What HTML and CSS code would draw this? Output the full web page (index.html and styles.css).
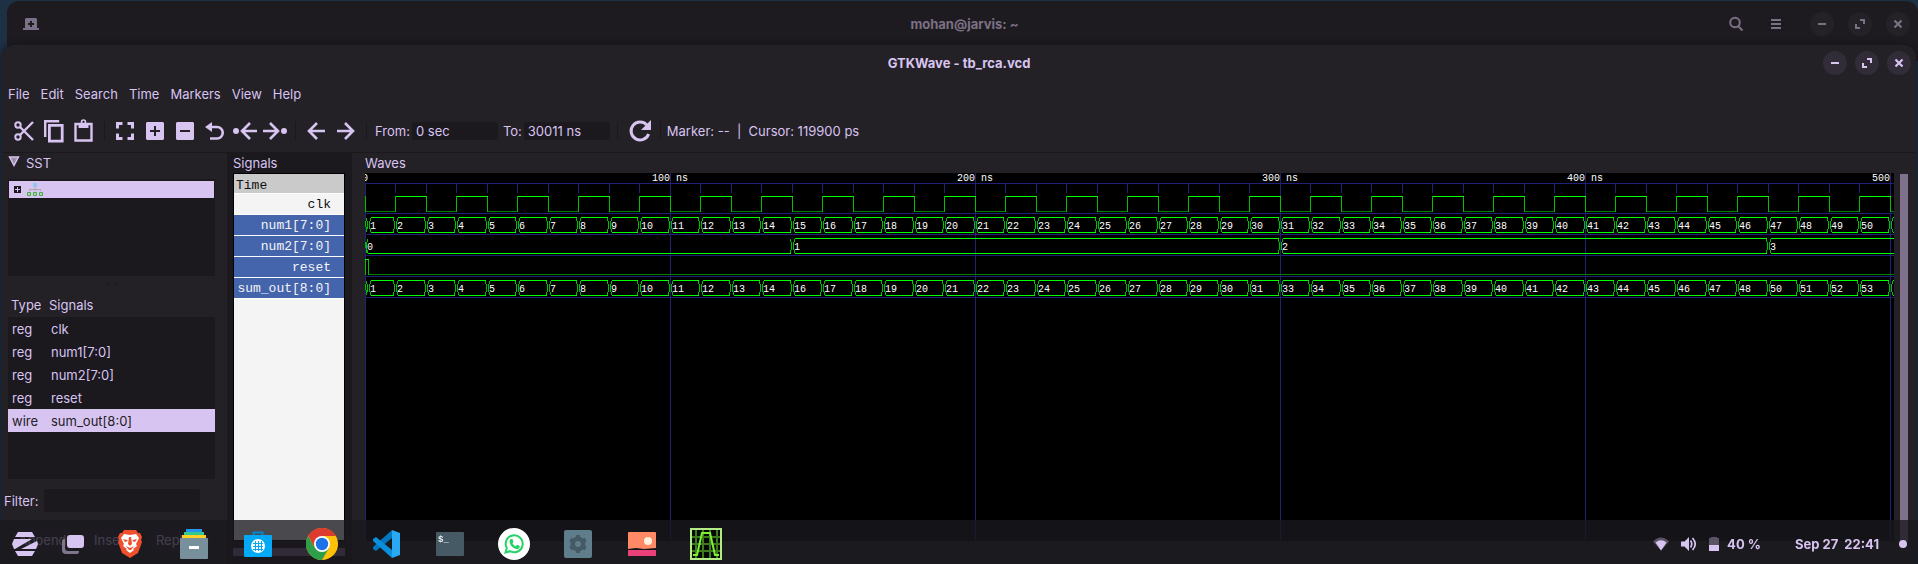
FILE: index.html
```html
<!DOCTYPE html>
<html lang="en">
<head>
<meta charset="utf-8">
<title>GTKWave - tb_rca.vcd</title>
<link rel="stylesheet" href="styles.css">
</head>
<body>
<div class="desktop">
  <header class="titlebar titlebar-back">
    <button class="tb-plain" aria-label="New tab"><svg width="16" height="12"><path fill="currentColor" fill-rule="evenodd" d="M3 0h10l1 1v9h2v2H0v-2h2V1zM7 3v2H5v2h2v2h2V7h2V5H9V3z"/></svg></button>
    <h2 class="title">mohan@jarvis: ~</h2>
    <div class="controls controls-back">
      <button class="tb-plain" aria-label="Search"><svg width="16" height="16" fill="none" stroke="currentColor" stroke-width="2"><circle cx="7" cy="6.500" r="4.800"/><path d="M10 10l4.500 4.500"/></svg></button>
      <button class="tb-plain tb-menu" aria-label="Menu"><svg width="10" height="10" fill="currentColor"><path d="M0 0h10v2H0zM0 4h10v2H0zM0 8h10v2H0z"/></svg></button>
      <button class="round" aria-label="Minimize"><svg width="10" height="10"><path fill="currentColor" d="M1 4h8v2H1z"/></svg></button>
      <button class="round" aria-label="Restore"><svg width="10" height="10"><path fill="currentColor" d="M5 0h5v5H8V2H5zM0 5h2v3h3v2H0z"/></svg></button>
      <button class="round" aria-label="Close"><svg width="10" height="10"><path stroke="currentColor" stroke-width="2.200" d="M1.500 1.500l7 7M8.500 1.500l-7 7"/></svg></button>
    </div>
  </header>
  <div class="window">
    <header class="titlebar titlebar-front">
      <h1 class="title">GTKWave - tb_rca.vcd</h1>
      <div class="controls">
        <button class="round" aria-label="Minimize"><svg width="10" height="10"><path fill="currentColor" d="M1 4h8v2H1z"/></svg></button>
        <button class="round" aria-label="Restore"><svg width="10" height="10"><path fill="currentColor" d="M5 0h5v5H8V2H5zM0 5h2v3h3v2H0z"/></svg></button>
        <button class="round" aria-label="Close"><svg width="10" height="10"><path stroke="currentColor" stroke-width="2.200" d="M1.500 1.500l7 7M8.500 1.500l-7 7"/></svg></button>
      </div>
    </header>
    <nav class="menubar">
      <button>File</button><button>Edit</button><button>Search</button><button>Time</button><button>Markers</button><button>View</button><button>Help</button>
    </nav>
    <div class="toolbar">
      <button class="tool" aria-label="Cut"><svg width="22" height="22" fill="none" stroke="currentColor"><circle cx="5" cy="5" r="2.700" stroke-width="2"/><circle cx="5" cy="17" r="2.700" stroke-width="2"/><path stroke-width="2.400" d="M7 7l13 13M7 15L20 2"/></svg></button>
      <button class="tool" aria-label="Copy"><svg width="22" height="24" fill="none" stroke="currentColor"><path stroke-width="2.400" d="M2.200 18V2.200h14"/><path stroke-width="2.800" d="M6.400 6.400h12.800v15.800H6.400z"/></svg></button>
      <button class="tool" aria-label="Paste"><svg width="20" height="24" fill="none" stroke="currentColor"><path stroke-width="2.400" d="M1.500 5h16v16.500h-16z"/><circle cx="9.500" cy="3" r="2" stroke-width="1.600"/><path fill="currentColor" stroke="none" d="M4.500 5h10v4h-10z"/></svg></button>
      <span class="sep"></span>
      <button class="tool" aria-label="Zoom fit"><svg width="20" height="20" fill="none" stroke="currentColor" stroke-width="3"><path d="M2.500 7.500v-5h5M12.500 2.500h5v5M17.500 12.500v5h-5M7.500 17.500h-5v-5"/></svg></button>
      <button class="tool" aria-label="Zoom in"><svg width="18" height="18"><path fill="currentColor" fill-rule="evenodd" d="M1 0h16l1 1v16l-1 1H1l-1-1V1zM8 4v4H4v2h4v4h2v-4h4V8h-4V4z"/></svg></button>
      <button class="tool" aria-label="Zoom out"><svg width="18" height="18"><path fill="currentColor" fill-rule="evenodd" d="M1 0h16l1 1v16l-1 1H1l-1-1V1zM4 8v2h10V8z"/></svg></button>
      <button class="tool" aria-label="Undo"><svg width="20" height="20"><path fill="currentColor" d="M0 6l7-5v10z"/><path fill="none" stroke="currentColor" stroke-width="2.600" d="M5 6h7a5.700 5.700 0 0 1 0 11.500H5"/></svg></button>
      <button class="tool" aria-label="To start"><svg width="24" height="20"><circle cx="3" cy="10" r="3" fill="currentColor"/><path fill="none" stroke="currentColor" stroke-width="2.600" d="M24 10H10M17 2l-8 8 8 8"/></svg></button>
      <button class="tool" aria-label="To end"><svg width="24" height="20"><circle cx="21" cy="10" r="3" fill="currentColor"/><path fill="none" stroke="currentColor" stroke-width="2.600" d="M0 10h14M7 2l8 8-8 8"/></svg></button>
      <span class="sep"></span>
      <button class="tool" aria-label="Previous edge"><svg width="18" height="20"><path fill="none" stroke="currentColor" stroke-width="2.600" d="M18 10H3M10 2l-8 8 8 8"/></svg></button>
      <button class="tool" aria-label="Next edge"><svg width="18" height="20"><path fill="none" stroke="currentColor" stroke-width="2.600" d="M0 10h15M8 2l8 8-8 8"/></svg></button>
      <span class="sep"></span>
      <label for="from" class="from">From:</label><input id="from" class="field time" type="text" value="0 sec">
      <label for="to" class="to">To:</label><input id="to" class="field time" type="text" value="30011 ns">
      <span class="sep sep-wide"></span>
      <button class="tool" aria-label="Reload"><svg width="22" height="22"><path fill="none" stroke="currentColor" stroke-width="3" d="M17.800 5A9 9 0 1 0 19.600 14"/><path fill="currentColor" d="M22 0v10H12z"/></svg></button>
      <span class="sep"></span>
      <span class="status">Marker: --&nbsp; |&nbsp; Cursor: 119900 ps</span>
    </div>
    <main class="panes">
      <section class="sst">
        <h3 class="pane-label sst-label"><svg width="12" height="11"><path d="M1.500 1h9L6 9.500z" fill="#9b8ea8" stroke="currentColor" stroke-width="1.400"/></svg>SST</h3>
        <div class="tree">
          <div class="tree-row" role="treeitem" aria-selected="true">
            <svg width="7" height="7"><path fill="#1b181e" d="M0 0h7v7H0z"/><path fill="#d8c4f1" d="M3 1h1v2h2v1H4v2H3V4H1V3h2z"/></svg>
            <svg width="16" height="14"><path fill="#8cc8f0" d="M6 0h4v4H6z"/><path fill="none" stroke="#aaa" d="M2.500 8V6.500h11V8M8 4v4"/><g fill="#a8e0a0" stroke="#4ca64c"><path d="M.5 9.500h3v3h-3zM6.500 9.500h3v3h-3zM12.500 9.500h3v3h-3z"/></g></svg>
          </div>
        </div>
        <div class="grip-h" aria-hidden="true"></div>
        <div class="signal-box">
          <table class="signal-table">
            <thead><tr><th class="type">Type</th><th>Signals</th></tr></thead>
            <tbody>
              <tr><td>reg</td><td>clk</td></tr>
              <tr><td>reg</td><td>num1[7:0]</td></tr>
              <tr><td>reg</td><td>num2[7:0]</td></tr>
              <tr><td>reg</td><td>reset</td></tr>
              <tr class="selected"><td>wire</td><td>sum_out[8:0]</td></tr>
            </tbody>
          </table>
        </div>
        <div class="filter"><label for="filter">Filter:</label><input id="filter" class="field" type="text"></div>
        <div class="actions"><button>Append</button><button>Insert</button><button>Replace</button></div>
      </section>
      <section class="signals">
        <h3 class="pane-label">Signals</h3>
        <ul class="names">
          <li class="time-row">Time</li>
          <li>clk</li>
          <li class="on">num1[7:0]</li>
          <li class="on">num2[7:0]</li>
          <li class="on">reset</li>
          <li class="on">sum_out[8:0]</li>
        </ul>
        <div class="scroll-h"></div>
      </section>
      <section class="waves">
        <h3 class="pane-label">Waves</h3>
        <div class="wave-row">
          <div class="wave-view"><svg id="waves" class="wave-svg" role="img" aria-label="Waveforms"></svg></div>
          <div class="scroll-v"></div>
        </div>
      </section>
    </main>
  </div>
  <footer class="dock">
    <div class="launch">
      <button aria-label="Menu"><svg width="26" height="24" fill="#d8c4f1"><path d="M6 0h14l3 5H3zM2 7h18L3 17H2l-2-5zM25 9l1 3-2 5H9zM3 19h20l-3 5H6z"/></svg></button>
      <button aria-label="Windows"><svg width="24" height="22"><path d="M3 6H2a2 2 0 0 0-2 2v9a4 4 0 0 0 4 4h11a2 2 0 0 0 2-2v-1H6a3 3 0 0 1-3-3z" fill="#7f758c"/><rect x="5" y="2" width="17" height="13" rx="3" fill="#d8c4f1"/></svg></button>
    </div>
    <div class="apps">
      <button aria-label="Brave"><svg width="24" height="28"><path fill="#f0502e" d="M6 0h12l2 3h2l2 4-1 3 1 2-4 11-8 5-8-5L0 12l1-2-1-3 2-4h2z"/><path fill="#fff" d="M6 4l6 1 6-1 3 4-3 6 1 2-4 3 1 1-4 3-4-3 1-1-4-3 1-2-3-6z"/><path fill="#f0502e" d="M11 7h2l1 7-2 2-2-2zM5 9l4 1 1 1-3 1zM19 9l-4 1-1 1 3 1zM8 16l4 2 4-2-3 4h-2z"/></svg></button>
      <button aria-label="Files"><svg width="28" height="30"><path fill="#2196f3" d="M6 0h16v4H6z"/><path fill="#36c98f" d="M4 3h20v4H4z"/><path fill="#ffd026" d="M2 6h24v4H2z"/><rect y="9" width="28" height="21" rx="1" fill="#78909c"/><path fill="#fff" d="M9 17h10v3H9z"/></svg></button>
      <button aria-label="Software"><svg width="28" height="26"><path d="M9.500 6V1.500h9V6" fill="none" stroke="#0288d1" stroke-width="2"/><rect y="4" width="28" height="22" rx="1" fill="#03a9f4"/><circle cx="14" cy="15" r="7" fill="#fff"/><path stroke="#03a9f4" stroke-width="1" d="M9 12.500h10M9 15.500h10M9 18.500h10M11.500 10v10M14.500 10v10M17.500 10v10"/></svg></button>
      <button aria-label="Chrome"><svg width="32" height="32"><circle cx="16" cy="16" r="16" fill="#ffc107"/><path fill="#dd3b2f" d="M2.100 8A16 16 0 0 1 29.900 8H16v8l-7 4z"/><path fill="#2e9e4b" d="M2.100 8A16 16 0 0 0 16 32l7-12-7-4-7 4z"/><circle cx="16" cy="16" r="8" fill="#fff"/><circle cx="16" cy="16" r="6.200" fill="#1a73e8"/></svg></button>
      <button aria-label="Code"><svg width="28" height="28"><path fill="#0277bd" d="M20 0v8L4 21l-3-2v-2z"/><path fill="#0a8fdc" d="M20 28v-8L4 7 1 9v2z"/><path fill="#29a9f4" d="M20 0l8 3v22l-8 3z"/></svg></button>
      <button aria-label="Terminal"><svg width="28" height="24"><rect width="28" height="24" rx="1" fill="#455a64"/><text x="2" y="10" class="prompt">$_</text></svg></button>
      <button aria-label="WhatsApp"><svg width="32" height="32"><circle cx="16" cy="16" r="16" fill="#fff"/><path d="M7.500 24.500l1.300-4.500A8.500 8.500 0 1 1 12 23.200z" fill="none" stroke="#25d366" stroke-width="2"/><path fill="#25d366" d="M12.500 11h2l1 3-1 1.200c.8 1.500 1.800 2.300 3.300 3l1.200-1.400 2.700 1.300c.2 2-1.400 3-3 3-3.500-.4-7-4-7.200-7.500 0-1 .4-2 1-2.600z"/></svg></button>
      <button aria-label="Settings"><svg width="28" height="28"><rect width="28" height="28" rx="2" fill="#607d8b"/><circle cx="14" cy="14" r="7.500" fill="#455a64"/><path stroke="#455a64" stroke-width="4" d="M14 5v18M6.200 9.500l15.600 9M21.800 9.500l-15.600 9"/><circle cx="14" cy="14" r="3" fill="#607d8b"/></svg></button>
      <button aria-label="Photos"><svg width="28" height="24"><rect width="28" height="24" rx="1" fill="#ff8a65"/><circle cx="20" cy="9" r="4" fill="#fff3e0"/><path fill="#ec407a" d="M0 18h28v6H0z"/><path fill="#151318" d="M0 17l8-1 8 1 12-1v2H0z"/></svg></button>
      <button aria-label="GTKWave"><svg width="32" height="32"><path fill="#040a02" stroke="#b4ea84" stroke-width="2" d="M1 1h30v30H1z"/><path stroke="#3f7a1e" stroke-width="2" d="M6 2v28M13 2v28M20 2v28M27 2v28M2 9h28M2 16h28M2 23h28"/><path fill="none" stroke="#7df032" stroke-width="2" d="M3 27h4l5-22h8l5 22h4"/></svg></button>
    </div>
    <div class="tray">
      <svg width="16" height="14"><path fill="#5b5363" d="M0 4.500Q8-3.500 16 4.500L8 13.500z"/><path fill="#d8c4f1" d="M2.500 5.500Q8 1 13.500 5.500L8 13.500z"/></svg>
      <svg width="16" height="14"><path fill="#d8c4f1" d="M0 4.500h3.500L8 0v14L3.500 9.500H0z"/><path fill="none" stroke="#d8c4f1" stroke-width="1.700" d="M9.500 3.500Q12 7 9.500 10.500M11.500 1q5.500 6 0 12"/></svg>
      <svg width="10" height="14"><path fill="#5b5363" d="M2 0h6v1h2v8H0V1h2z"/><path fill="#d8c4f1" d="M0 8h10v6H0z"/></svg>
      <span class="battery">40 %</span>
      <time class="clock">Sep 27&nbsp; 22:41</time>
      <span class="dot"></span>
    </div>
  </footer>
</div>
<script src="waves.js"></script>
</body>
</html>
```
FILE: styles.css
```css
* { box-sizing: border-box; }
body {
  margin: 0;
  background: #1d3044;
  color: #d8c4f1;
  font: 13px/18px Inter, "Noto Sans", sans-serif;
}
button {
  border: 0;
  padding: 0;
  background: none;
  color: inherit;
  font: inherit;
}
svg { display: block; }
h1, h2, h3, ul { margin: 0; padding: 0; }
.desktop {
  min-height: 100vh;
  display: flex;
  flex-direction: column;
  padding-top: 1px;
}

.titlebar {
  display: grid;
  grid-template-columns: 1fr auto 1fr;
  align-items: center;
}
.title { font-size: 13px; line-height: 18px; font-weight: 700; grid-column: 2; }
.titlebar-back {
  height: 60px;
  margin: 0 0 -16px 7px;
  padding: 0 8px 14px 12px;
  background: #1e1b20;
  border-radius: 12px 12px 0 0;
  color: #7b7186;
}
.controls {
  display: flex;
  align-items: center;
  justify-content: flex-end;
  gap: 8px;
}
.controls-back { gap: 14px; }
.tb-plain { width: 24px; height: 24px; display: grid; place-items: center; }
.tb-menu { margin: 0 8px 0 2px; }
.round {
  width: 24px;
  height: 24px;
  display: grid;
  place-items: center;
  border-radius: 50%;
  background: #242127;
}

.window {
  flex: 1;
  display: flex;
  flex-direction: column;
  position: relative;
  margin: 0 2px;
  background: #232026;
  border-radius: 12px 12px 0 0;
  box-shadow: 0 0 6px #151318;
}
.titlebar-front { height: 36px; padding: 0 5px; }
.titlebar-front .round { background: #322c39; }
.menubar { display: flex; height: 26px; gap: 1px; align-items: center; padding: 0 1px; }
.menubar button { padding: 0 5px; }
.toolbar {
  display: flex;
  height: 46px;
  align-items: center;
  padding: 3px 7px 0;
  border-bottom: 1px solid #1b181e;
}
.tool { width: 30px; height: 30px; display: grid; place-items: center; }
.tool svg { overflow: visible; }
.sep { width: 11px; height: 18px; display: flex; justify-content: center; }
.sep::before { content: ""; width: 1px; background: #1b181e; }
.sep-wide { width: 15px; }
.field {
  border: 0;
  border-radius: 3px;
  padding: 0 4px;
  background: #1b181e;
  color: inherit;
  font: inherit;
}
.time { width: 86px; height: 18px; margin-left: 2px; }
.from { margin-left: 3px; }
.to { margin-left: 5px; }
.status { margin-left: 1px; }

.panes { flex: 1; display: flex; }
.pane-label { height: 20px; font-size: 13px; line-height: 20px; font-weight: 400; }
.sst {
  width: 225px;
  padding: 0 12px 11px 6px;
  display: flex;
  flex-direction: column;
}
.sst-label { display: flex; gap: 6px; height: 26px; }
.sst-label svg { margin-top: 3px; }
.tree { height: 97px; padding: 2px 1px; background: #1b181e; }
.tree-row { display: flex; gap: 6px; align-items: center; height: 17px; padding-left: 5px; background: #d8c4f1; }
.grip-h { width: 8px; height: 4px; margin: 6px auto; border: 0 solid #1b181e; border-width: 0 1px; }
.signal-box { flex: 1; background: #1b181e; }
.signal-table { width: 100%; border-collapse: collapse; table-layout: fixed; }
.signal-table th { height: 25px; padding: 0 0 0 3px; text-align: left; font-weight: 400; background: #232026; }
.signal-table .type { width: 38px; }
.signal-table td { height: 23px; padding: 0 0 0 4px; white-space: nowrap; }
.signal-table td + td { padding-left: 5px; }
.selected { background: #d8c4f1; color: #232026; }
.filter { display: flex; align-items: center; margin: 10px 15px 0 -4px; gap: 5px; }
.filter .field { flex: 1; min-width: 0; height: 23px; }
.actions { display: flex; gap: 8px; margin: 15px 4px 0; }
.actions button { flex: 1; height: 26px; border-radius: 12px; background: #2b2730; }

.signals {
  width: 125px;
  padding: 0 7px 8px 6px;
  display: flex;
  flex-direction: column;
  background: #1b181e;
}
.names {
  flex: 1;
  list-style: none;
  background: #f4f4f4;
  border: 1px solid #000;
  font: 13px/20px "Liberation Mono", monospace;
  color: #111;
}
.names li { height: 21px; padding: 1px 13px 0 2px; border-bottom: 1px solid #fff; text-align: right; }
.names .time-row { height: 20px; padding-top: 2px; background: #cacaca; text-align: left; }
.names .on { background: #4464ac; color: #f4f4f4; }
.scroll-h { height: 8px; margin-top: 7px; background: #7f708c; }

.waves { flex: 1; min-width: 0; padding: 0 8px 23px 13px; display: flex; flex-direction: column; }
.wave-row { flex: 1; display: flex; gap: 6px; }
.wave-view { flex: 1; min-width: 0; overflow: hidden; background: #000; }
.wave-svg { width: 100%; height: 368px; shape-rendering: crispEdges; fill: none; }
.wave-svg text { fill: #fff; font: 10px "Liberation Mono", monospace; }
.grid { stroke: #202078; }
.high { stroke: #00ff00; }
.edge { stroke: #00c000; }
.low { stroke: #008000; }
.scroll-v { width: 8px; margin-top: 1px; background: #7f708c; }

.dock {
  position: fixed;
  left: 0;
  right: 0;
  bottom: 0;
  height: 44px;
  display: flex;
  align-items: center;
  padding: 4px 11px 0 1px;
  background: rgba(25, 24, 29, 0.78);
}
.launch { display: flex; gap: 1px; }
.apps { display: flex; gap: 16px; margin-left: 8px; }
.dock button { width: 48px; height: 40px; display: grid; place-items: center; }
.prompt { font: 700 9px "Liberation Mono", monospace; fill: #eceff1; }
.tray { display: flex; align-items: center; margin-left: auto; gap: 12px; font-weight: 700; }
.tray .battery { margin-left: -4px; }
.clock { margin-left: 22px; }
.dot { width: 8px; height: 8px; margin-left: 8px; border-radius: 50%; background: #d8c4f1; }
```
FILE: waves.js
```js
const svg = document.getElementById("waves");
const NS = "http://www.w3.org/2000/svg";
const width = svg.clientWidth;
const height = svg.clientHeight;
const step = 30.5; // pixels per 10 ns
const count = Math.ceil(width / step) + 1;
const at = (k) => Math.floor(k * step) + 0.5;

const paths = { grid: "", low: "", edge: "", high: "" };
const hline = (kind, x1, x2, y) => { paths[kind] += `M${x1} ${y + 0.5}H${x2}`; };
const line = (kind, x1, y1, x2, y2) => { paths[kind] += `M${x1} ${y1}L${x2} ${y2}`; };
const labels = [];

// Ruler and row separators
[10, 40, 61, 82, 103, 124].forEach((y) => hline("grid", 0, width, y));
for (let k = 0; k < count; k++) {
  const major = k % 10 === 0;
  line("grid", at(k), major && k ? 0 : 10, at(k), major ? height : 20);
  if (major) labels.push([at(k) - 0.5, 8, k ? `${k * 10} ns` : "0", "middle"]);
}

// Clock
line("edge", 0.5, 23, 0.5, 39);
for (let k = 0; k < count; k++) {
  const up = k % 2 === 1;
  hline(up ? "high" : "low", at(k), at(k + 1), up ? 23 : 38);
  line("edge", at(k + 1), 23, at(k + 1), 39);
}

// Reset pulse
hline("high", 0, 4, 86);
line("edge", 0.5, 86, 0.5, 102);
line("edge", 3.5, 86, 3.5, 102);
hline("low", 3, width, 101);

function bus(top, values) {
  const bottom = top + 15;
  line("edge", 0.5, top + 4, 1.5, bottom);
  values.forEach(({ x, text }, i) => {
    const end = i + 1 < values.length ? values[i + 1].x : width + 4;
    if (text !== "0") hline("high", x + 2, end - 2, top);
    hline("high", x + 2, end - 2, bottom);
    [-1, 1].forEach((side) => {
      paths.edge += `M${x + 2 * side} ${top + 1}V${top + 4}M${x + side} ${top + 4}V${top + 12}M${x + 2 * side} ${top + 12}V${bottom}`;
    });
    // A value is written only where its segment has room for it
    if (x + 16 < width) labels.push([x + 1.5, top + 12, text, "start"]);
  });
}

const num2 = (k) => Math.floor((k + 2) / 16);
const slots = [...Array(count).keys()];
const startOf = (k) => (k ? at(k) : 3.5);
bus(44, slots.map((k) => ({ x: startOf(k), text: String(k + 1) })));
bus(65, slots.filter((k) => k === 0 || num2(k) !== num2(k - 1))
  .map((k) => ({ x: k ? at(k) : 0.5, text: String(num2(k)) })));
bus(107, slots.map((k) => ({ x: startOf(k), text: String(k + 1 + num2(k)) })));

for (const [kind, d] of Object.entries(paths)) {
  const path = document.createElementNS(NS, "path");
  path.setAttribute("class", kind);
  path.setAttribute("d", d);
  svg.append(path);
}
for (const [x, y, content, anchor] of labels) {
  const text = document.createElementNS(NS, "text");
  text.setAttribute("x", x);
  text.setAttribute("y", y);
  text.setAttribute("text-anchor", anchor);
  text.textContent = content;
  svg.append(text);
}
```
